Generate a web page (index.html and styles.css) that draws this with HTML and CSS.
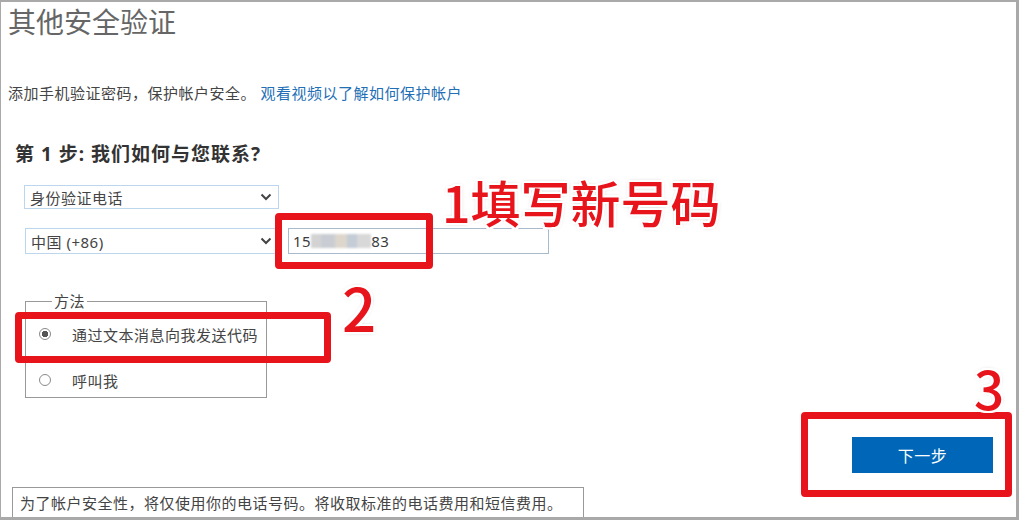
FILE: index.html
```html
<!DOCTYPE html>
<html lang="zh-CN">

<head>
	<meta charset="UTF-8">
	<meta name="viewport" content="width=device-width, initial-scale=1.0">
	<title>其他安全验证</title>
	<link rel="stylesheet" href="styles.css">
</head>

<body>
	<div class="frame">
		<h1 class="title">其他安全验证</h1>
		<p class="intro">添加手机验证密码，保护帐户安全。 <a href="#">观看视频以了解如何保护帐户</a></p>
		<h2 class="step">第 1 步: 我们如何与您联系?</h2>

		<div class="form">
			<div class="select select-wide">
				<span>身份验证电话</span>
				<svg class="chevron" width="12" height="8" viewBox="0 0 12 8"><path d="M1.5 1.5l4.5 4.5 4.5-4.5" fill="none" stroke="#444" stroke-width="2"/></svg>
			</div>
			<div class="phone-row">
				<div class="select select-country">
					<span>中国 (+86)</span>
					<svg class="chevron" width="12" height="8" viewBox="0 0 12 8"><path d="M1.5 1.5l4.5 4.5 4.5-4.5" fill="none" stroke="#444" stroke-width="2"/></svg>
				</div>
				<div class="phone-input">
					<span>15</span>
					<span class="blur">
						<i class="b1"></i><i class="b2"></i><i class="b3"></i><i class="b4"></i><i class="b5"></i>
					</span>
					<span>83</span>
				</div>
			</div>

			<fieldset class="method">
				<legend>方法</legend>
				<label class="option"><span class="radio checked"></span>通过文本消息向我发送代码</label>
				<label class="option"><span class="radio"></span>呼叫我</label>
			</fieldset>
		</div>

		<div class="actions">
			<button class="next">下一步</button>
		</div>

		<div class="notice">为了帐户安全性，将仅使用你的电话号码。将收取标准的电话费用和短信费用。</div>

		<div class="mark mark-phone"></div>
		<div class="mark mark-method"></div>
		<div class="mark mark-next"></div>
		<div class="note note-1">1填写新号码</div>
		<div class="note note-2">2</div>
		<div class="note note-3">3</div>
	</div>
</body>

</html>
```

FILE: styles.css
```css
body {
	margin: 0;
	font-family: "Noto Sans", "Noto Sans CJK SC", sans-serif;
	font-size: 15px;
	letter-spacing: 0.5px;
	color: #444;
	background: #fff;
}

.frame {
	position: relative;
	width: 1019px;
	height: 520px;
	box-sizing: border-box;
	border-style: solid;
	border-color: #a9a9a9;
	border-width: 2px 3px 3px 1px;
	padding-left: 7px;
	overflow: hidden;
}

.title {
	margin: 0;
	padding-top: 2px;
	font-size: 28px;
	line-height: 36px;
	font-weight: 400;
	letter-spacing: 0;
	color: #666;
}

.intro {
	margin: 43px 0 0;
	line-height: 20px;
}

.intro a {
	color: #236fb6;
	text-decoration: none;
}

.step {
	margin: 39px 0 0 7px;
	font-size: 19px;
	line-height: 24px;
	letter-spacing: 1px;
	font-weight: bold;
	color: #333;
}

.form {
	padding-left: 16px;
	margin-top: 19px;
}

.select {
	display: flex;
	align-items: center;
	justify-content: space-between;
	box-sizing: border-box;
	border: 1px solid #bcd6ee;
	padding: 0 6px 0 5px;
	background: #fff;
}

.select-wide {
	width: 255px;
	height: 24px;
}

.select-country {
	width: 254px;
	height: 26px;
	margin-left: 1px;
}

.phone-row {
	display: flex;
	align-items: center;
	gap: 9px;
	margin-top: 19px;
}

.phone-input {
	display: flex;
	align-items: center;
	box-sizing: border-box;
	width: 261px;
	height: 26px;
	border: 1px solid #a7bbcd;
	padding-left: 4px;
	color: #3c3c3c;
}

.blur {
	display: flex;
	align-items: center;
	width: 60px;
	height: 16px;
	filter: blur(1px);
}

.blur i {
	display: block;
	height: 14px;
}

.b1 { width: 10px; background: #d3d3d3; }
.b2 { width: 14px; background: #c9cdd3; }
.b3 { width: 12px; background: #ddd6cd; }
.b4 { width: 10px; background: #c4ccd6; }
.b5 { width: 14px; background: #d8d8d8; }

.method {
	width: 242px;
	box-sizing: border-box;
	margin: 39px 0 0 1px;
	padding: 13px 0 5px 13px;
	border: 1px solid #999;
}

.method legend {
	margin-left: 13px;
	padding: 0 2px;
	line-height: 16px;
	color: #444;
}

.option {
	display: flex;
	align-items: center;
	gap: 21px;
	height: 24px;
}

.option + .option {
	margin-top: 22px;
}

.radio {
	width: 12px;
	height: 12px;
	box-sizing: border-box;
	border: 1px solid #8a8a8a;
	border-radius: 50%;
	background: #fff;
}

.radio.checked {
	background: radial-gradient(circle, #555 0 3px, #fff 3.5px);
}

.actions {
	display: flex;
	justify-content: flex-end;
	padding-right: 23px;
	margin-top: 39px;
}

.next {
	width: 141px;
	height: 36px;
	border: none;
	background: #0067b8;
	color: #fff;
	font-family: inherit;
	font-size: 16px;
	letter-spacing: 0.5px;
	cursor: pointer;
}

.notice {
	width: 572px;
	box-sizing: border-box;
	margin: 14px 0 0 4px;
	padding: 5px 7px 20px;
	border: 1px solid #999;
	line-height: 20px;
	white-space: nowrap;
}

/* annotations drawn over the page */
.mark {
	position: absolute;
	box-sizing: border-box;
	border: 7px solid #e8141c;
	border-radius: 4px;
}

.mark-phone {
	left: 274px;
	top: 211px;
	width: 158px;
	height: 56px;
}

.mark-method {
	left: 14px;
	top: 310px;
	width: 316px;
	height: 51px;
}

.mark-next {
	left: 800px;
	top: 410px;
	width: 211px;
	height: 85px;
}

.note {
	position: absolute;
	font-family: "Noto Sans CJK SC", sans-serif;
	font-weight: 500;
	letter-spacing: 0;
	color: #e8141c;
	line-height: 1;
	text-shadow:
		2px 0 #fff, -2px 0 #fff, 0 2px #fff, 0 -2px #fff,
		2px 2px #fff, -2px -2px #fff, 2px -2px #fff, -2px 2px #fff,
		0 0 4px rgba(0, 0, 0, 0.35);
}

.note-1 {
	left: 441px;
	top: 174px;
	font-size: 50px;
}

.note-2 {
	left: 341px;
	top: 274px;
	font-size: 60px;
}

.note-3 {
	left: 973px;
	top: 359px;
	font-size: 53px;
}
```
